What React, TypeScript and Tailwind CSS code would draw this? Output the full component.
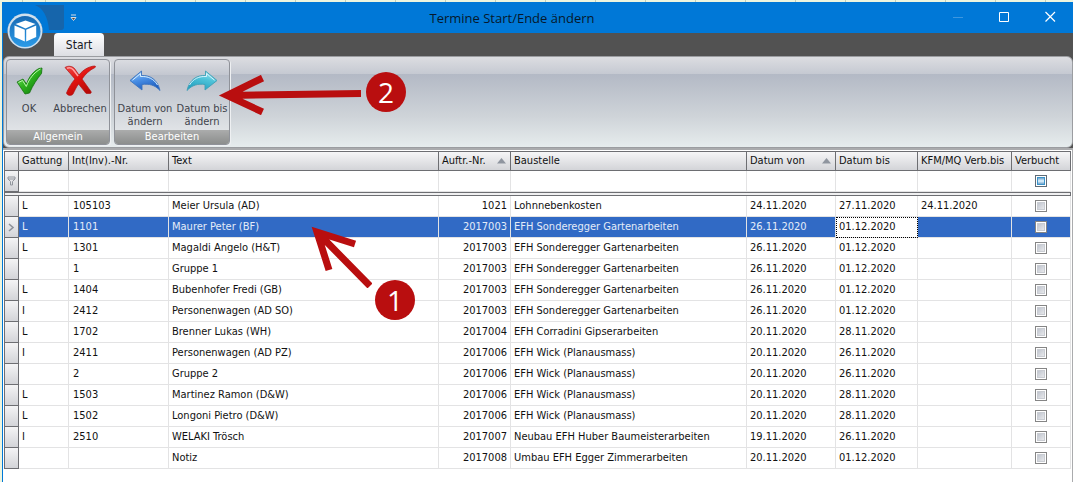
import { useState } from "react"
import clsx from "clsx"

interface Entry {
  gattung: string
  nr: string
  text: string
  auftrag: string
  baustelle: string
  von: string
  bis: string
  verbucht?: string
}

const entries: Entry[] = [
  { gattung: "L", nr: "105103", text: "Meier Ursula (AD)", auftrag: "1021", baustelle: "Lohnnebenkosten", von: "24.11.2020", bis: "27.11.2020", verbucht: "24.11.2020" },
  { gattung: "L", nr: "1101", text: "Maurer Peter (BF)", auftrag: "2017003", baustelle: "EFH Sonderegger Gartenarbeiten", von: "26.11.2020", bis: "01.12.2020" },
  { gattung: "L", nr: "1301", text: "Magaldi Angelo (H&T)", auftrag: "2017003", baustelle: "EFH Sonderegger Gartenarbeiten", von: "26.11.2020", bis: "01.12.2020" },
  { gattung: "", nr: "1", text: "Gruppe 1", auftrag: "2017003", baustelle: "EFH Sonderegger Gartenarbeiten", von: "26.11.2020", bis: "01.12.2020" },
  { gattung: "L", nr: "1404", text: "Bubenhofer Fredi (GB)", auftrag: "2017003", baustelle: "EFH Sonderegger Gartenarbeiten", von: "26.11.2020", bis: "01.12.2020" },
  { gattung: "I", nr: "2412", text: "Personenwagen (AD SO)", auftrag: "2017003", baustelle: "EFH Sonderegger Gartenarbeiten", von: "26.11.2020", bis: "01.12.2020" },
  { gattung: "L", nr: "1702", text: "Brenner Lukas (WH)", auftrag: "2017004", baustelle: "EFH Corradini Gipserarbeiten", von: "20.11.2020", bis: "28.11.2020" },
  { gattung: "I", nr: "2411", text: "Personenwagen (AD PZ)", auftrag: "2017006", baustelle: "EFH Wick (Planausmass)", von: "20.11.2020", bis: "26.11.2020" },
  { gattung: "", nr: "2", text: "Gruppe 2", auftrag: "2017006", baustelle: "EFH Wick (Planausmass)", von: "20.11.2020", bis: "26.11.2020" },
  { gattung: "L", nr: "1503", text: "Martinez Ramon (D&W)", auftrag: "2017006", baustelle: "EFH Wick (Planausmass)", von: "20.11.2020", bis: "28.11.2020" },
  { gattung: "L", nr: "1502", text: "Longoni Pietro (D&W)", auftrag: "2017006", baustelle: "EFH Wick (Planausmass)", von: "20.11.2020", bis: "28.11.2020" },
  { gattung: "I", nr: "2510", text: "WELAKI Trösch", auftrag: "2017007", baustelle: "Neubau EFH Huber Baumeisterarbeiten", von: "19.11.2020", bis: "26.11.2020" },
  { gattung: "", nr: "", text: "Notiz", auftrag: "2017008", baustelle: "Umbau EFH Egger Zimmerarbeiten", von: "20.11.2020", bis: "01.12.2020" },
]

const columns = [
  { label: "Gattung", width: "w-[50px]" },
  { label: "Int(Inv).-Nr.", width: "w-[100px]" },
  { label: "Text", width: "w-[270px]" },
  { label: "Auftr.-Nr.", width: "w-[72px]", sorted: true },
  { label: "Baustelle", width: "" },
  { label: "Datum von", width: "w-[89px]", sorted: true },
  { label: "Datum bis", width: "w-[82px]" },
  { label: "KFM/MQ Verb.bis", width: "w-[94px]" },
  { label: "Verbucht", width: "w-[59px]" },
]

const indicator = "border-x border-b border-[#6d6e72] bg-linear-to-b from-[#f4f4f5] to-[#d3d4d8] p-0"
const checkbox =
  "block size-3 mx-auto appearance-none border border-[#858585] bg-linear-to-br from-[#b4bac6] to-[#f4f4f4] shadow-[inset_0_0_0_1px_#ffffff,inset_0_0_0_2px_#c9ccd2]"

function CheckIcon() {
  return (
    <svg width="32" height="32" viewBox="0 0 32 32" aria-hidden="true">
      <defs>
        <linearGradient id="green" x1="0" y1="0" x2="1" y2="1">
          <stop offset="0" stopColor="#8ee87a" />
          <stop offset="0.45" stopColor="#2fb51f" />
          <stop offset="1" stopColor="#0b6f08" />
        </linearGradient>
      </defs>
      <path d="M4 18 10 15 13.500 20C16 13 20 7.500 26 4.500L29 4C28.500 6 29 8 28.500 9.500C24 15 20 21 16.500 29L12 30Z" fill="url(#green)" stroke="#14700f" strokeWidth="0.8" />
      <path d="M5.500 18.500 9.500 16.500 13.300 22.500C16 15 21 8.500 27.500 5" fill="none" stroke="#b9f5ac" strokeWidth="1" />
    </svg>
  )
}

function CrossIcon() {
  return (
    <svg width="32" height="32" viewBox="0 0 32 32" aria-hidden="true">
      <defs>
        <linearGradient id="red" x1="0" y1="0" x2="0.6" y2="1">
          <stop offset="0" stopColor="#f04a4a" />
          <stop offset="0.5" stopColor="#e2130f" />
          <stop offset="1" stopColor="#b50907" />
        </linearGradient>
      </defs>
      <path
        d="M1 3.500C4 1.500 8 2 10.500 4.500L15 11C19 6 24.500 2.500 30.500 2 31.500 2 32 3 31 3.500 25.500 6 21 10.500 18 15L27 27.500C27.500 28.500 27 29.500 26 29.500H23C22 29.500 21.500 29 21 28L14.500 20C12 23.500 10.500 27 9 30 8 32 3 32 2.500 29 4.500 24 7.500 19 11 15Z"
        fill="url(#red)"
        stroke="#b11212"
        strokeWidth="0.7"
      />
      <path d="M3 4.200C5.500 3.200 8 4 9.500 6L14 12" fill="none" stroke="#ff9d9d" strokeWidth="1.600" />
    </svg>
  )
}

function CurvedArrow({ forward = false }: { forward?: boolean }) {
  const id = forward ? "cyan" : "blue"
  return (
    <svg width="32" height="32" viewBox="0 0 32 32" className={clsx(forward && "-scale-x-100")} aria-hidden="true">
      <defs>
        <linearGradient id={id} x1="0" y1="0" x2="0.4" y2="1">
          <stop offset="0" stopColor={forward ? "#b6eff5" : "#a9d3fb"} />
          <stop offset="0.5" stopColor={forward ? "#4fc3d9" : "#4a90e6"} />
          <stop offset="1" stopColor={forward ? "#27a3c2" : "#1f5fc0"} />
        </linearGradient>
      </defs>
      <path
        d="M1 16.500 12.500 7V11.500C21 11 28.500 15.500 31 26.500 26 21 20 19.500 13 20.500V26Z"
        fill={`url(#${id})`}
        stroke={forward ? "#3f9fb5" : "#3c74bd"}
        strokeWidth="0.9"
        strokeLinejoin="round"
      />
      <path d="M3.500 16.200 11.500 9.500V12.500C19 12 25 15 28.500 21" fill="none" stroke="#e2f6ff" strokeWidth="0.9" />
    </svg>
  )
}

function RibbonGroup({ title, children }: { title: string; children: React.ReactNode }) {
  return (
    <section className="flex flex-col overflow-hidden rounded-sm border border-[#8f9299] bg-[linear-gradient(#dadce1,#c3c7d0_15px,#b7bdc8_15px,#e0e3e6_70px)] shadow-[1px_1px_0_#eef0f2]">
      <div className="flex grow items-start">{children}</div>
      <h2 className="h-[14px] bg-linear-to-b from-[#abacac] to-[#8c8e8d] text-center leading-[14px] text-white">{title}</h2>
    </section>
  )
}

function RibbonButton({ icon, label, width }: { icon: React.ReactNode; label: string; width: string }) {
  return (
    <button type="button" className={clsx("flex flex-col items-center gap-[6px] pt-1 leading-[13px] text-[#3f434b]", width)}>
      {icon}
      <span>{label}</span>
    </button>
  )
}

function SortMark() {
  return (
    <svg width="9" height="6" viewBox="0 0 9 6" className="mr-1 shrink-0" aria-hidden="true">
      <path d="M4.500 0 9 5.500H0Z" fill="#8f959f" />
    </svg>
  )
}

function TitleBar() {
  return (
    <header className="relative flex h-[31px] items-center justify-center bg-[#0078d7]">
      <svg width="30" height="26" viewBox="0 0 30 26" className="absolute top-[3px] left-8" aria-hidden="true">
        <path d="M0 0C8 3 13 12 14 25H26Q29 25 29 22V0Z" fill="#1665ab" />
      </svg>
      <svg width="36" height="38" viewBox="0 0 36 38" className="absolute top-[9px] left-1 z-10" aria-hidden="true">
        <defs>
          <linearGradient id="orb" x1="0" y1="0" x2="0" y2="1">
            <stop offset="0" stopColor="#1769b3" />
            <stop offset="1" stopColor="#2b9be8" />
          </linearGradient>
        </defs>
        <circle cx="18" cy="20.500" r="17.500" fill="#3f5163" />
        <circle cx="18" cy="20" r="17.500" fill="#cfe0ee" />
        <circle cx="18" cy="20.500" r="15.500" fill="url(#orb)" />
        <path d="M18.500 9.500 28.500 13 18.500 17.500 8.500 13Z" fill="#fff" />
        <path d="M7.500 14.500 17.800 18.800V30.500L7.500 26Z" fill="#fff" />
        <path d="M29.200 14.500 19.200 18.800V30.500L29.200 26Z" fill="#fff" />
      </svg>
      <button type="button" aria-label="Schnellzugriff anpassen" className="absolute top-3 left-[67px]">
        <svg width="7" height="8" viewBox="0 0 7 8">
          <path d="M1 1H6M1 3.500H6L3.500 6.500Z" fill="#5a4b3f" stroke="#d4dbe3" />
        </svg>
      </button>
      <h1 className="mr-[52px] font-['Open_Sans',sans-serif] text-[13px] leading-[18px] text-[#06182c]">Termine Start/Ende ändern</h1>
      <div className="absolute top-2 right-[17px] flex gap-[35px]">
        <button type="button" aria-label="Minimieren">
          <svg width="11" height="13" viewBox="0 0 11 13"><path d="M0 7.500H10" stroke="#3d97e0" /></svg>
        </button>
        <button type="button" aria-label="Maximieren">
          <svg width="11" height="13" viewBox="0 0 11 13"><path d="M.5 2.500H9.500V11.500H.5Z" fill="none" stroke="#fff" /></svg>
        </button>
        <button type="button" aria-label="Schliessen">
          <svg width="11" height="13" viewBox="0 0 11 13"><path d="M.5 2 10 11.500M10 2 .5 11.500" stroke="#fff" strokeWidth="1.200" /></svg>
        </button>
      </div>
    </header>
  )
}

function Ribbon() {
  return (
    <div className="bg-[#525252]">
      <nav className="flex h-[23px] pl-[51px]">
        <button type="button" className="w-[50px] rounded-t-sm bg-linear-to-b from-white to-[#dcdee3] text-xs text-[#16191f]">
          Start
        </button>
      </nav>
      <div className="flex h-[92px] gap-1 rounded-md border border-[#9b9da1] bg-[linear-gradient(#dcdde1,#c5c9d2_17px,#b3b9c5_17px,#cfd4d9_60px,#e6eced)] p-[2px]">
        <RibbonGroup title="Allgemein">
          <RibbonButton width="w-11" label="OK" icon={<CheckIcon />} />
          <RibbonButton width="w-[58px]" label="Abbrechen" icon={<CrossIcon />} />
        </RibbonGroup>
        <RibbonGroup title="Bearbeiten">
          <RibbonButton width="w-[60px]" label="Datum von ändern" icon={<CurvedArrow />} />
          <RibbonButton width="w-[54px]" label="Datum bis ändern" icon={<CurvedArrow forward />} />
        </RibbonGroup>
      </div>
    </div>
  )
}

function EntryTable() {
  const [selected, setSelected] = useState(1)

  return (
    <table className="w-full table-fixed border-separate border-spacing-0 whitespace-nowrap">
      <colgroup>
        <col className="w-[15px]" />
        {columns.map((c) => (
          <col key={c.label} className={c.width} />
        ))}
      </colgroup>
      <thead>
        <tr className="h-5">
          <th className={clsx(indicator, "border-t")} />
          {columns.map((c) => (
            <th key={c.label} className="border-y border-r border-[#6d6e72] bg-linear-to-b from-[#f6f6f7] to-[#d3d4d8] p-0 pl-[3px] text-left font-normal">
              <div className="flex items-center justify-between">
                {c.label}
                {c.sorted && <SortMark />}
              </div>
            </th>
          ))}
        </tr>
        <tr className="h-[21px]">
          <td className={indicator}>
            <svg width="9" height="10" viewBox="0 0 9 10" className="mx-auto" aria-hidden="true">
              <path d="M1 1H8V3L5.500 5.500V9H3.500V5.500L1 3ZM1 3H8" fill="none" stroke="#91959c" />
            </svg>
          </td>
          {columns.map((c) => (
            <td key={c.label} className="border-r border-b border-[#e3e3e4] p-0">
              {c.label === "Verbucht" ? (
                <input
                  type="checkbox"
                  aria-label="Filter Verbucht"
                  className="mx-auto block size-3 appearance-none border border-[#5f6b76] bg-linear-to-b from-[#1c6ea8] via-[#e2f5ff] to-[#1c6ea8] shadow-[inset_0_0_0_1px_#ffffff,inset_0_0_0_2px_#3b93c9]"
                />
              ) : (
                <input type="text" aria-label={`Filter ${c.label}`} className="block h-5 w-full px-[3px] outline-none" />
              )}
            </td>
          ))}
        </tr>
        <tr className="h-1">
          <td colSpan={10} className="border border-[#6d6e72] bg-[#f0f0f1] p-0" />
        </tr>
      </thead>
      <tbody>
        {entries.map((e, i) => {
          const active = i === selected
          const cell = "border-r border-b border-[#e3e3e4] p-0 px-[3px]"
          return (
            <tr key={i} onClick={() => setSelected(i)} className={clsx("h-[21px]", active && "bg-[#316ac5] text-[#e4ecf8]")}>
              <td className={indicator}>
                {active && (
                  <svg width="7" height="9" viewBox="0 0 7 9" className="mx-auto" aria-hidden="true">
                    <path d="M1 1 5 4.500 1 8" fill="none" stroke="#8e929a" strokeWidth="1.600" />
                  </svg>
                )}
              </td>
              <td className={cell}>{e.gattung}</td>
              <td className={clsx(cell, "pl-1")}>{e.nr}</td>
              <td className={cell}>{e.text}</td>
              <td className={clsx(cell, "text-right")}>{e.auftrag}</td>
              <td className={cell}>{e.baustelle}</td>
              <td className={cell}>{e.von}</td>
              <td className={clsx(cell, active && "bg-white text-[#111] outline-1 -outline-offset-1 outline-dotted outline-black")}>{e.bis}</td>
              <td className={cell}>{e.verbucht}</td>
              <td className={cell}>
                <input type="checkbox" aria-label={`Verbucht ${e.text}`} className={checkbox} />
              </td>
            </tr>
          )
        })}
      </tbody>
    </table>
  )
}

// Hinweispfeile der Anleitung
function Callouts() {
  return (
    <>
      <svg width="144" height="40" viewBox="0 0 144 40" className="pointer-events-none absolute top-[75px] left-[217px]" aria-hidden="true">
        <path d="M45.500 3 10 20.500 45.500 37M10 20.500 144 18.500" fill="none" stroke="#b90e0f" strokeWidth="7" strokeMiterlimit="8" />
      </svg>
      <div className="absolute top-[72px] left-[366px] flex size-10 items-center justify-center rounded-full bg-[#b90e0f] font-['Open_Sans',sans-serif] text-[28px] leading-none text-white">
        2
      </div>
      <svg width="62" height="64" viewBox="0 0 62 64" className="pointer-events-none absolute top-[224px] left-[310px]" aria-hidden="true">
        <path d="M45 20 7 8 19 46M7 8 60 62" fill="none" stroke="#b90e0f" strokeWidth="7" strokeMiterlimit="8" />
      </svg>
      <div className="absolute top-[280px] left-[375px] flex size-10 items-center justify-center rounded-full bg-[#b90e0f] font-['Open_Sans',sans-serif] text-[28px] leading-none text-white">
        1
      </div>
    </>
  )
}

export default function App() {
  return (
    <div className="relative flex min-h-screen flex-col bg-[repeating-linear-gradient(90deg,#c3cdb8_0,#c3cdb8_1px,#eef5df_1px,#eef5df_50px)] bg-[position:45px_0] pt-[2px] font-['DejaVu_Sans_Condensed','DejaVu_Sans',sans-serif] text-[11px] leading-4 text-[#111]">
      <div className="ml-[2px] flex grow flex-col border-l border-[#0078d7] bg-white">
        <TitleBar />
        <Ribbon />
        <main className="grow border-t-2 border-r border-[#aaabad] pt-px pl-px pr-px">
          <EntryTable />
        </main>
      </div>
      <Callouts />
    </div>
  )
}
